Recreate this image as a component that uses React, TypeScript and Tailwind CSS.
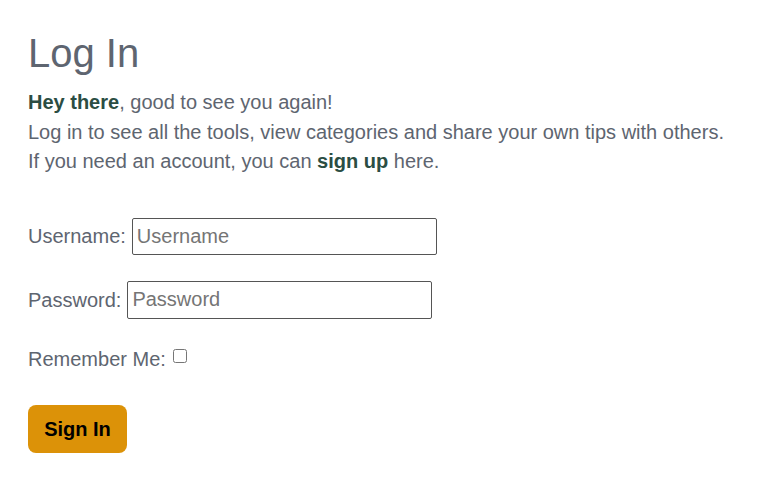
export default function App() {
  return (
    <div className="min-h-screen bg-white px-[28px] pt-[29px] font-['Liberation_Sans',Arial,sans-serif] text-[#5e6570]">
      <h1 className="text-[40px] leading-[48px] font-normal">Log In</h1>
      <div className="mt-[11px] text-[20px] leading-[29.5px]">
        <p>
          <strong className="font-bold text-[#2b4d43]">Hey there</strong>, good to see you again!
        </p>
        <p>Log in to see all the tools, view categories and share your own tips with others.</p>
        <p>
          If you need an account, you can <strong className="font-bold text-[#2b4d43]">sign up</strong> here.
        </p>
      </div>
      <form className="mt-[41px] text-[20px]">
        <div className="flex items-center gap-[6px]">
          <label htmlFor="username">Username:</label>
          <input
            id="username"
            placeholder="Username"
            className="h-[37px] w-[305px] rounded-[2px] border border-[#555] px-[4px] text-[20px] placeholder:text-[#757575]"
          />
        </div>
        <div className="mt-[26px] flex items-center gap-[6px]">
          <label htmlFor="password">Password:</label>
          <input
            id="password"
            type="password"
            placeholder="Password"
            className="h-[38px] w-[305px] rounded-[2px] border border-[#555] px-[4px] text-[20px] placeholder:text-[#757575]"
          />
        </div>
        <div className="mt-[25px] flex items-center gap-[7px]">
          <label htmlFor="remember">Remember Me:</label>
          <input id="remember" type="checkbox" className="mb-[5px] h-[14px] w-[14px]" />
        </div>
        <button
          type="button"
          className="mt-[31px] h-[48px] w-[99px] rounded-[8px] bg-[#dc9208] text-[20px] font-bold text-black"
        >
          Sign In
        </button>
      </form>
    </div>
  );
}
